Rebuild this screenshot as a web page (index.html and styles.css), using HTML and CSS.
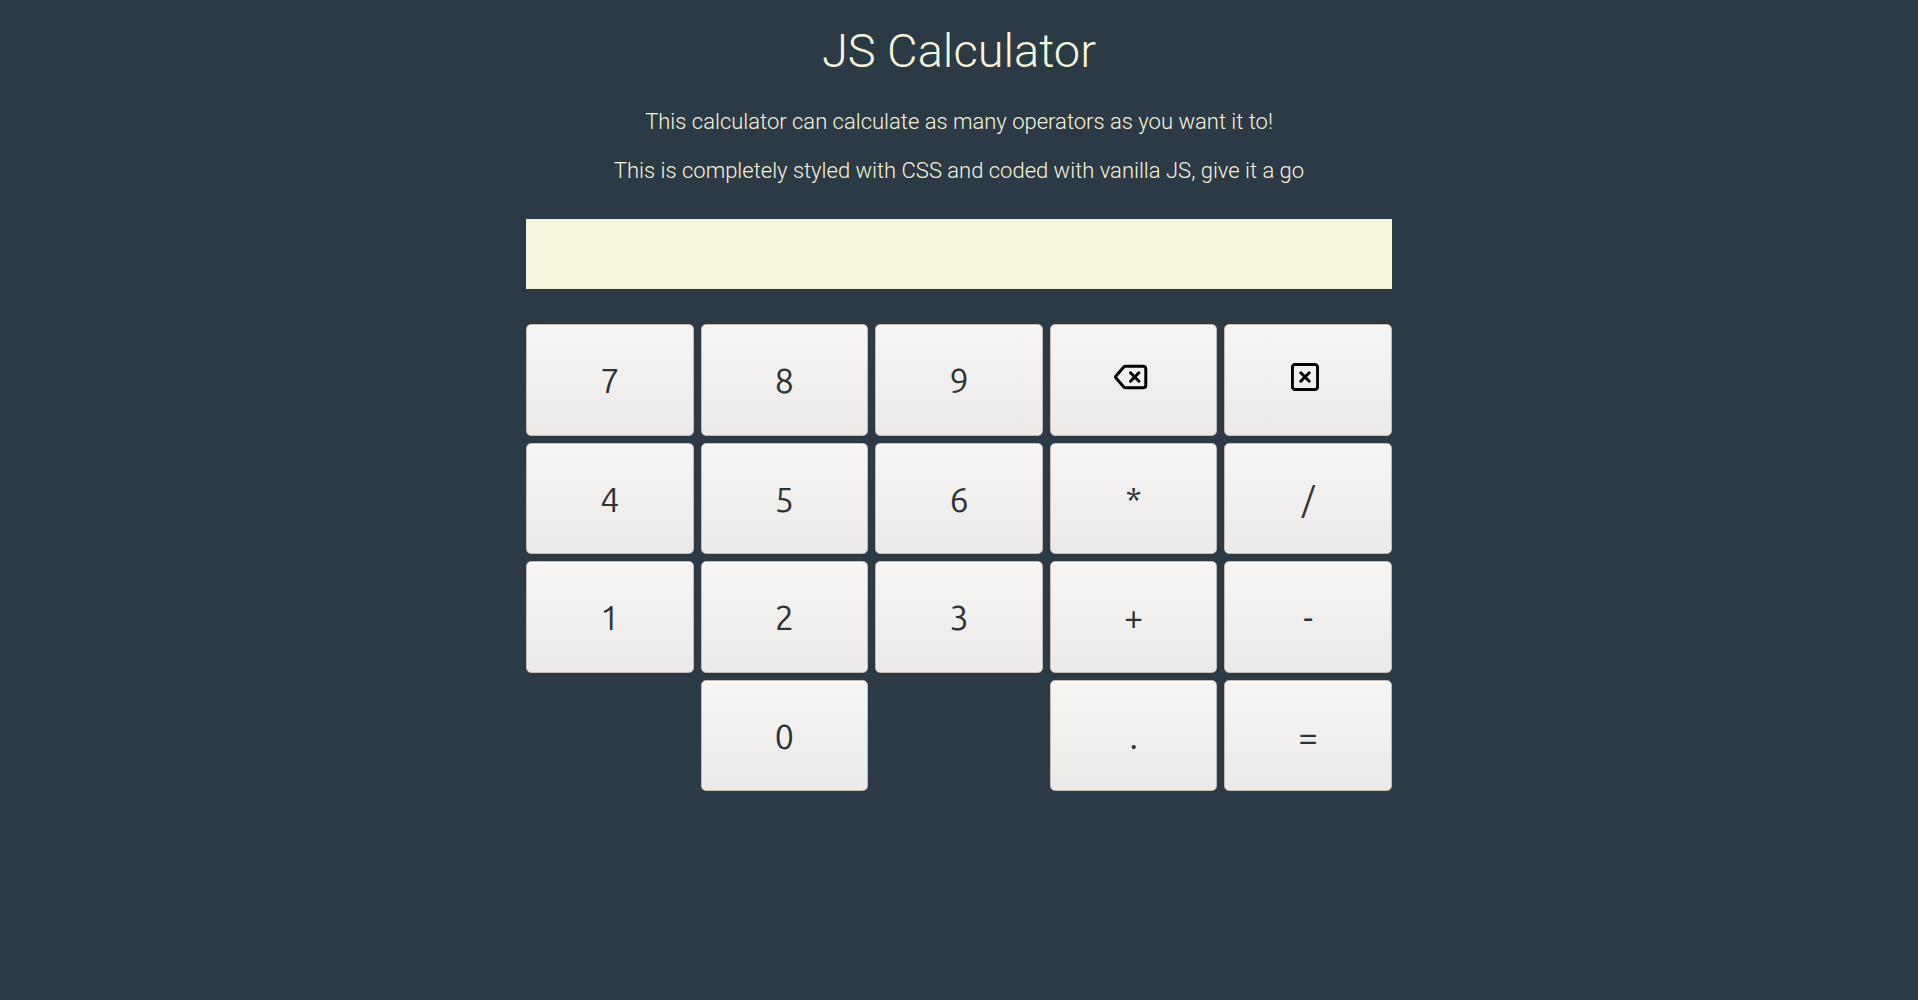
FILE: index.html
```html
<!DOCTYPE html>
<html lang="en">
<head>
  <meta charset="utf-8">
  <meta name="viewport" content="width=device-width, initial-scale=1">
  <title>JS Calculator</title>
  <link rel="stylesheet" href="styles.css">
</head>
<body>
  <main class="calculator">
    <header class="intro">
      <h1 class="title">JS Calculator</h1>
      <p class="text">This calculator can calculate as many operators as you want it to!</p>
      <p class="text">This is completely styled with CSS and coded with vanilla JS, give it a go</p>
    </header>
    <input class="display" type="text" aria-label="Result" readonly>
    <div class="keys">
      <button class="key" type="button">7</button>
      <button class="key" type="button">8</button>
      <button class="key" type="button">9</button>
      <button class="key key-icon" type="button" aria-label="Backspace">
        <svg class="icon" viewBox="0 0 34 28" width="34" height="28" aria-hidden="true">
          <path d="M11.5 3.2H29Q31.8 3.2 31.8 6V22Q31.8 24.8 29 24.8H11.5Q10.6 24.8 10 24.2L2 15Q1.2 14 2 13L10 3.8Q10.6 3.2 11.5 3.2Z"/>
          <path d="M16.5 9.8L24.9 18.2M24.9 9.8L16.5 18.2"/>
        </svg>
      </button>
      <button class="key key-icon" type="button" aria-label="Clear">
        <svg class="icon" viewBox="0 0 28 28" width="28" height="28" aria-hidden="true">
          <rect x="1.4" y="1.4" width="25.2" height="25.2" rx="2.8"/>
          <path d="M9.8 9.8L18.2 18.2M18.2 9.8L9.8 18.2"/>
        </svg>
      </button>
      <button class="key" type="button">4</button>
      <button class="key" type="button">5</button>
      <button class="key" type="button">6</button>
      <button class="key" type="button">*</button>
      <button class="key" type="button">/</button>
      <button class="key" type="button">1</button>
      <button class="key" type="button">2</button>
      <button class="key" type="button">3</button>
      <button class="key" type="button">+</button>
      <button class="key" type="button">-</button>
      <button class="key key-zero" type="button">0</button>
      <button class="key key-point" type="button">.</button>
      <button class="key" type="button">=</button>
    </div>
  </main>
</body>
</html>
```
FILE: styles.css
```css
* {
  box-sizing: border-box;
}

body {
  margin: 0;
  background: #2c3a45;
  color: beige;
  font-family: Roboto, sans-serif;
  font-weight: 300;
}

.calculator {
  width: 100%;
  max-width: 866px;
  margin: 0 auto;
  padding: 23px 0;
}

.intro {
  text-align: center;
}

.title {
  margin: 0 0 31px;
  font-size: 47px;
  line-height: 56px;
  font-weight: 300;
}

.text {
  margin: 0 0 25px;
  font-size: 22px;
  line-height: 24px;
}

.display {
  display: block;
  width: 100%;
  height: 70px;
  margin: 36px 0 35px;
  padding: 0 16px;
  border: 0;
  border-radius: 0;
  background: beige;
  color: #2e3436;
  font: 34px Ubuntu, "Noto Sans", sans-serif;
  text-align: right;
}

.keys {
  display: grid;
  grid-template-columns: repeat(5, 1fr);
  grid-template-rows: repeat(4, 1fr);
  gap: 7px;
  min-height: 467px;
}

.key {
  display: flex;
  align-items: center;
  justify-content: center;
  padding: 1px 0 0;
  border: 1px solid #c4bcb4;
  border-radius: 5px;
  background: linear-gradient(#f6f5f3, #ebeae8);
  box-shadow: inset 0 1px #fff;
  color: #2e3436;
  font: 34px Ubuntu, "Noto Sans", sans-serif;
}

.key-icon {
  padding: 0 6px 6px 0;
}

.key-zero {
  grid-column: 2;
}

.key-point {
  grid-column: 4;
}

.icon {
  fill: none;
  stroke: #000;
  stroke-width: 3;
  stroke-linecap: round;
  stroke-linejoin: round;
}
```
